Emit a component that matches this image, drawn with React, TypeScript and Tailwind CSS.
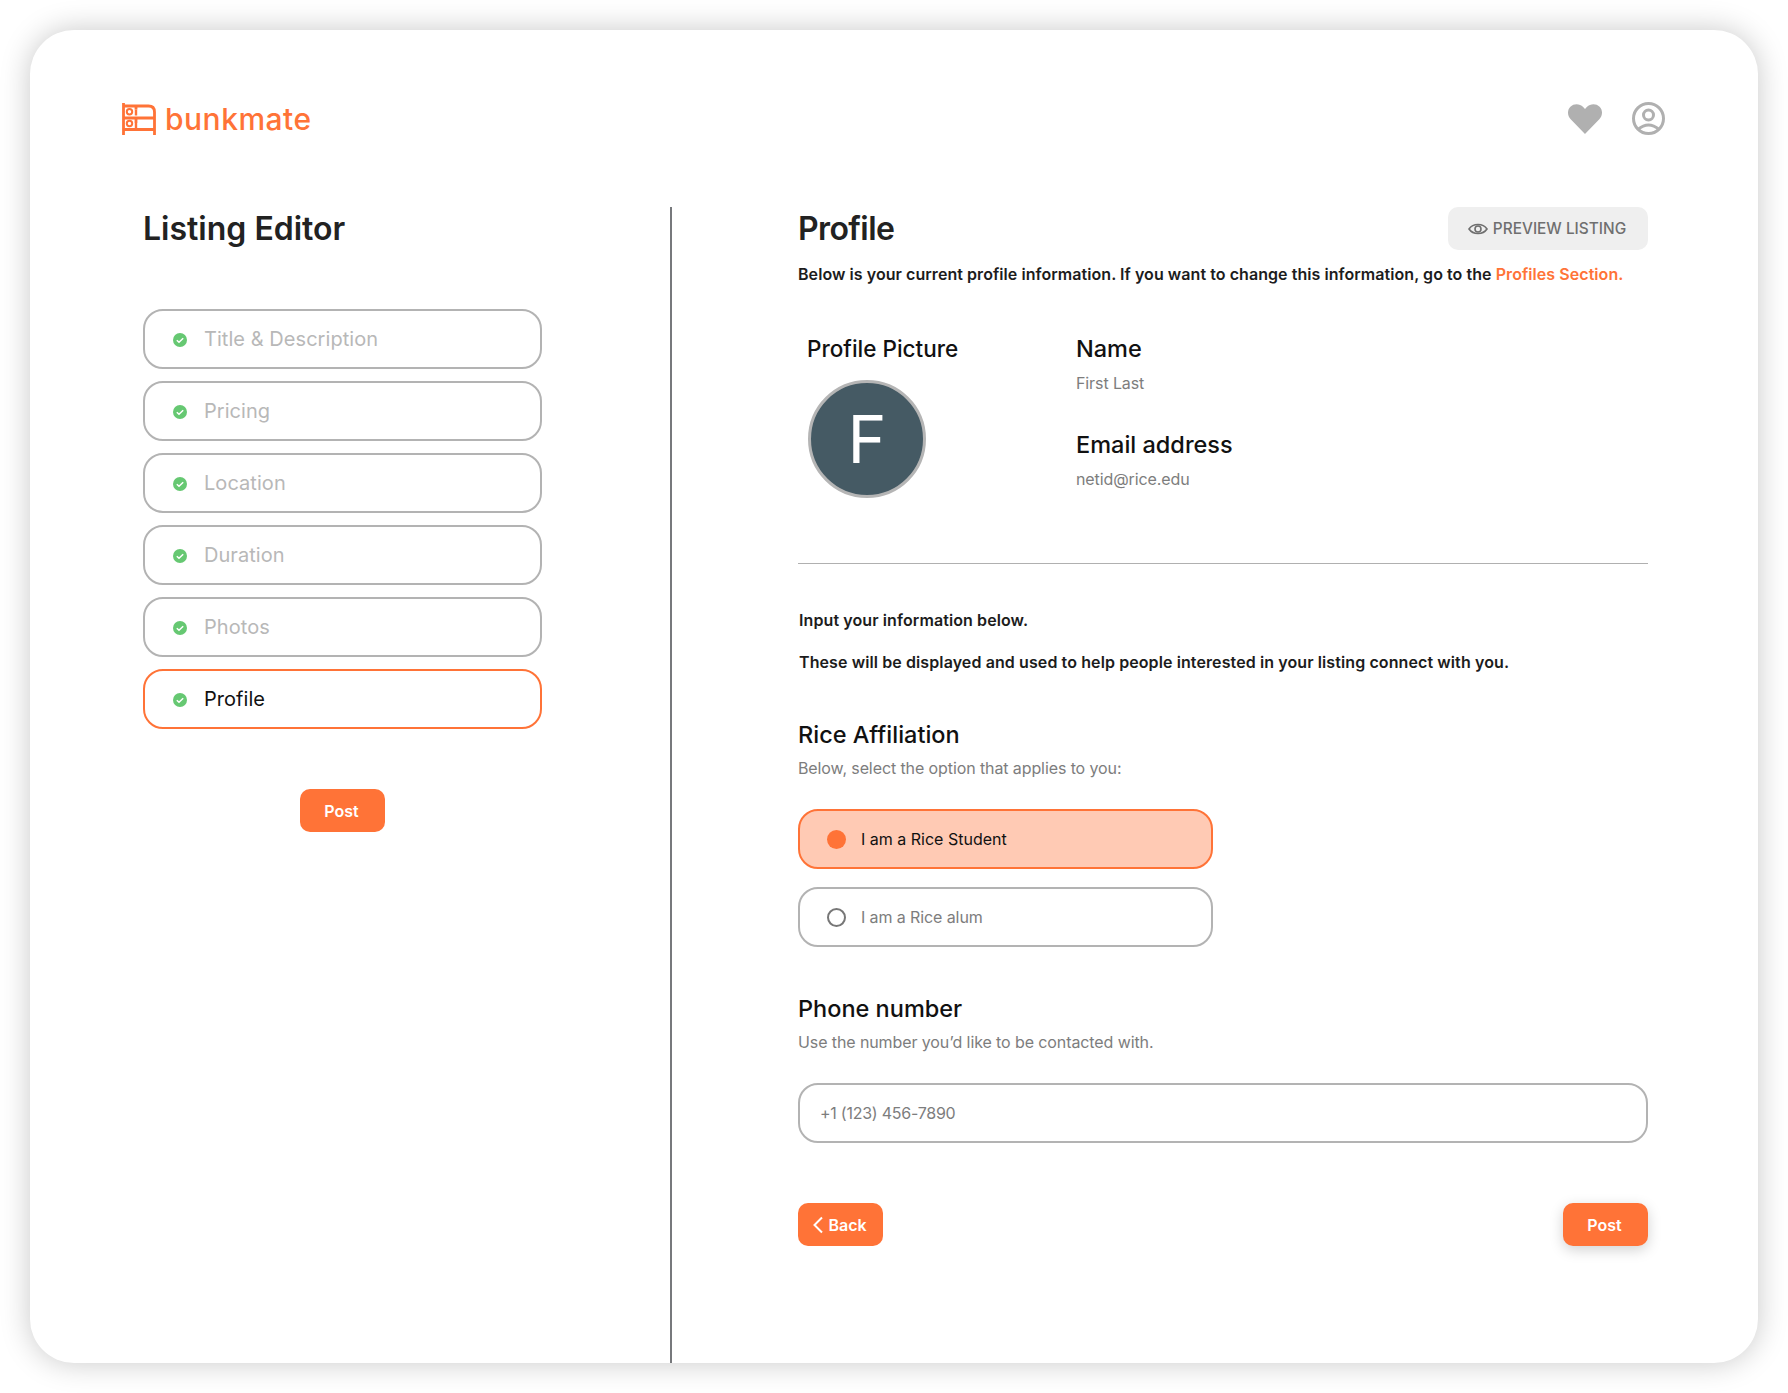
import React from "react";

const Logo = () => (
  <svg width="34" height="32" viewBox="0 0 34 32" fill="none" stroke="#FF7337" strokeWidth="2.8">
    <path d="M1.5 0V32M32.5 9V32" />
    <path d="M1.5 3H26.5Q32.5 3 32.5 9" />
    <path d="M1.5 15H32.5M1.5 26.5H32.5M14 3V6.5M14 15V20" />
    <path d="M14 6.5V12.5M14 20V26" strokeWidth="2.4" />
    <circle cx="7.5" cy="8.8" r="2.7" strokeWidth="2" />
    <circle cx="7.5" cy="20.5" r="2.7" strokeWidth="2" />
  </svg>
);

const Check = () => (
  <svg width="14" height="14" viewBox="0 0 14 14" className="shrink-0 mt-[1px]">
    <circle cx="7" cy="7" r="7" fill="#66C872" />
    <path d="M3.8 7.2L6 9.3L10.2 5.2" fill="none" stroke="#fff" strokeWidth="1.5" />
  </svg>
);

const Step = ({ label, active }: { label: string; active?: boolean }) => (
  <div
    className={`flex items-center h-[60px] w-[399px] rounded-[20px] border-2 pl-[28px] gap-[17px] text-[20px] tracking-[0.05px] ${
      active ? "border-[#FF7337] text-[#111111]" : "border-[#b3b3b3] text-[#b8b8b8]"
    }`}
  >
    <Check />
    <span>{label}</span>
  </div>
);

const OrangeButton = ({ children, shadow }: { children: React.ReactNode; shadow?: boolean }) => (
  <button
    className={`flex items-center justify-center h-[43px] w-[85px] pr-[2px] rounded-[10px] bg-[#FF7337] text-white text-[16px] font-semibold ${
      shadow ? "shadow-[0_4px_14px_rgba(0,0,0,0.18)]" : ""
    }`}
  >
    {children}
  </button>
);

export default function App() {
  return (
    <div
      className="w-[1788px] h-[1393px] bg-white p-[30px] overflow-hidden"
      style={{ fontFamily: '"Inter", "Liberation Sans", sans-serif' }}
    >
      <div className="w-[1728px] h-[1333px] rounded-[44px] bg-white shadow-[0_0_30px_rgba(0,0,0,0.22)] flex flex-col">
        <header className="h-[177px] shrink-0 flex items-start justify-between pl-[92px] pr-[93px] pt-[72px]">
          <div className="flex items-center gap-[9px]">
            <Logo />
            <span className="text-[30px] leading-[34px] font-medium text-[#FF7337] tracking-[0.5px]">bunkmate</span>
          </div>
          <div className="flex items-center gap-[30px]">
            <svg width="34" height="30" viewBox="0 0 24 21" fill="#b0b0b0">
              <path d="M12 21L1.9 10.7C-0.6 8-0.6 4 1.7 1.8 4.2-0.7 8.3-0.5 10.7 2L12 3.4 13.3 2C15.7-0.5 19.8-0.7 22.3 1.8 24.6 4 24.6 8 22.1 10.7Z" />
            </svg>
            <svg width="33" height="33" viewBox="0 0 33 33" fill="none" stroke="#b0b0b0" strokeWidth="3">
              <circle cx="16.5" cy="16.5" r="15" />
              <circle cx="16.5" cy="13" r="5" />
              <path d="M6 27.5Q16.5 18.5 27 27.5" />
            </svg>
          </div>
        </header>

        <div className="flex flex-1 min-h-0">
          <aside className="w-[642px] shrink-0 border-r-2 border-[#77797c] pl-[113px]">
            <h1 className="text-[32px] leading-[42px] font-semibold text-[#222222] mt-[1px] mb-[-1px]">Listing Editor</h1>
            <div className="mt-[60px] flex flex-col gap-[12px]">
              <Step label="Title & Description" />
              <Step label="Pricing" />
              <Step label="Location" />
              <Step label="Duration" />
              <Step label="Photos" />
              <Step label="Profile" active />
            </div>
            <div className="w-[399px] flex justify-center mt-[60px]">
              <OrangeButton>Post</OrangeButton>
            </div>
          </aside>

          <main className="w-[976px] shrink-0 pl-[126px]">
            <div className="flex items-center justify-between h-[43px]">
              <h2 className="text-[32px] leading-[42px] font-semibold text-[#222222] tracking-[-0.6px]">Profile</h2>
              <button className="flex items-center justify-center gap-[5px] pr-[2px] w-[200px] h-[43px] rounded-[10px] bg-[#efefef] text-[#6f6f6f] text-[15.4px] font-medium">
                <svg width="20" height="14" viewBox="0 0 20 14" fill="none" stroke="#6f6f6f" strokeWidth="1.6">
                  <path d="M1 7C5 1 15 1 19 7C15 13 5 13 1 7Z" />
                  <circle cx="10" cy="7" r="3" />
                </svg>
                PREVIEW LISTING
              </button>
            </div>

            <p className="mt-[12px] text-[16px] leading-[24px] font-semibold text-[#1c1c1c] whitespace-nowrap tracking-[0.06px]">
              Below is your current profile information. If you want to change this information, go to the{" "}
              <span className="text-[#FF7337]">Profiles Section.</span>
            </p>

            <div className="mt-[48px] flex h-[229px]">
              <div className="w-[278px] pl-[9px]">
                <div className="text-[22.5px] leading-[30px] font-medium text-[#111111]">Profile Picture</div>
                <div className="mt-[16px] ml-[1px] w-[118px] h-[118px] rounded-full bg-[#455A64] border-[3px] border-[#b5b5b5] flex items-center justify-center text-white text-[66px] font-normal">
                  F
                </div>
              </div>
              <div>
                <div className="text-[23.5px] leading-[30px] font-medium text-[#111111]">Name</div>
                <div className="mt-[9px] text-[16px] leading-[20px] text-[#7d7d7d] tracking-[-0.1px]">First Last</div>
                <div className="mt-[37px] text-[23.5px] leading-[30px] font-medium text-[#111111]">Email address</div>
                <div className="mt-[9px] text-[16px] leading-[20px] text-[#7d7d7d] tracking-[-0.1px]">netid@rice.edu</div>
              </div>
            </div>

            <hr className="w-[850px] border-t border-[#b0b0b0]" />

            <p className="mt-[44px] pl-[1px] text-[16px] leading-[24px] font-semibold text-[#1c1c1c] tracking-[0.1px]">Input your information below.</p>
            <p className="mt-[18px] pl-[1px] text-[16px] leading-[24px] font-semibold text-[#1c1c1c] tracking-[0.1px]">
              These will be displayed and used to help people interested in your listing connect with you.
            </p>

            <h3 className="mt-[46px] text-[23.5px] leading-[30px] font-medium text-[#111111]">Rice Affiliation</h3>
            <p className="mt-[6px] text-[16px] leading-[24px] text-[#7d7d7d] tracking-[-0.1px]">Below, select the option that applies to you:</p>

            <div className="mt-[29px] flex flex-col gap-[18px] w-[415px]">
              <div className="flex items-center h-[60px] rounded-[20px] border-2 border-[#FF7337] bg-[#FFCAB4] pl-[27px] gap-[15px] text-[16px] text-[#111111]">
                <span className="w-[19px] h-[19px] rounded-full bg-[#FF7337]" />
                I am a Rice Student
              </div>
              <div className="flex items-center h-[60px] rounded-[20px] border-2 border-[#b3b3b3] pl-[27px] gap-[15px] text-[16px] text-[#7d7d7d]">
                <span className="w-[19px] h-[19px] rounded-full border-2 border-[#777777]" />
                <span className="tracking-[-0.1px]">I am a Rice alum</span>
              </div>
            </div>

            <h3 className="mt-[47px] text-[23.5px] leading-[30px] font-medium text-[#111111]">Phone number</h3>
            <p className="mt-[6px] text-[16px] leading-[24px] text-[#7d7d7d] tracking-[-0.1px]">Use the number you’d like to be contacted with.</p>

            <div className="mt-[29px] w-[850px] h-[60px] rounded-[20px] border-2 border-[#b3b3b3] flex items-center pl-[20px] text-[16px] text-[#7d7d7d] tracking-[-0.25px]">
              +1 (123) 456-7890
            </div>

            <div className="mt-[60px] w-[850px] flex justify-between">
              <OrangeButton>
                <svg width="12" height="18" viewBox="0 0 12 18" fill="none" stroke="#fff" strokeWidth="2" className="mr-[4px]">
                  <path d="M10 1.5L2.5 9L10 16.5" />
                </svg>
                Back
              </OrangeButton>
              <OrangeButton shadow>Post</OrangeButton>
            </div>
          </main>
        </div>
      </div>
    </div>
  );
}
